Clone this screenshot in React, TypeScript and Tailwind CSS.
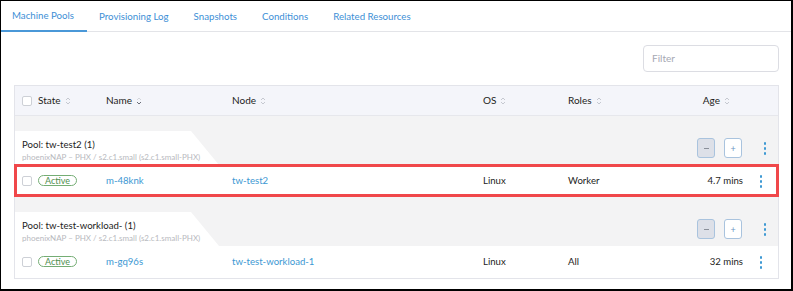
import React from 'react';

type Machine = {
    name: string;
    node: string;
    os: string;
    roles: string;
    age: string;
    highlight?: boolean;
};

type Pool = {
    title: string;
    sub: string;
    machine: Machine;
};

const pools: Pool[] = [
    {
        title: 'Pool: tw-test2 (1)',
        sub: 'phoenixNAP – PHX / s2.c1.small (s2.c1.small-PHX)',
        machine: { name: 'm-48knk', node: 'tw-test2', os: 'Linux', roles: 'Worker', age: '4.7 mins', highlight: true },
    },
    {
        title: 'Pool: tw-test-workload- (1)',
        sub: 'phoenixNAP – PHX / s2.c1.small (s2.c1.small-PHX)',
        machine: { name: 'm-gq96s', node: 'tw-test-workload-1', os: 'Linux', roles: 'All', age: '32 mins' },
    },
];

const tabs = ['Machine Pools', 'Provisioning Log', 'Snapshots', 'Conditions', 'Related Resources'];

const grid = 'grid grid-cols-[23px_68px_126px_251px_85px_1fr_70px_35px] items-center';

function SortIcon({ active }: { active?: boolean }) {
    return (
        <svg width="6" height="10" viewBox="0 0 6 10" className="ml-[4px]">
            <path d="M1 4 L3 2 L5 4" fill="none" stroke={active ? '#d3d6dc' : '#c5c8d0'} strokeWidth="1" />
            <path d="M1 6 L3 8 L5 6" fill="none" stroke={active ? '#6b6e78' : '#c5c8d0'} strokeWidth="1" />
        </svg>
    );
}

function Checkbox() {
    return <span className="block w-[10px] h-[10px] rounded-[2px] border border-[#cdd0d6] bg-white" />;
}

function Kebab() {
    return (
        <div className="flex flex-col gap-[2px]">
            {[0, 1, 2].map((i) => (
                <span key={i} className="block w-[2px] h-[3px] rounded-full bg-[#3d98d3]" />
            ))}
        </div>
    );
}

function PoolGroup({ pool }: { pool: Pool }) {
    const m = pool.machine;
    return (
        <div>
            {/* pool header */}
            <div className="bg-[#f3f3f4] pt-[15px]">
                <div className="flex items-center h-[34px]">
                    <div className="w-[204px] h-full bg-white pl-[7px] pt-[8px] [clip-path:polygon(0_0,176px_0,100%_100%,0_100%)]">
                        <div className="text-[9.6px] leading-[12px] text-[#1d1d22]">{pool.title}</div>
                        <div className="text-[8px] leading-[11px] mt-[1px] text-[#b8b9be] whitespace-nowrap">{pool.sub}</div>
                    </div>
                    <div className="flex-1 flex items-center justify-end">
                        <button className="w-[18px] h-[20px] rounded-[3px] border border-[#a9c3de] bg-[#dde0e8] flex items-center justify-center">
                            <span className="block w-[5px] h-px bg-[#8a8f99]" />
                        </button>
                        <button className="ml-[9px] w-[18px] h-[20px] rounded-[3px] border border-[#a9c3de] bg-white flex items-center justify-center text-[9px] leading-none text-[#6b96c4]">
                            +
                        </button>
                        <div className="ml-[22px] mr-[12px]">
                            <Kebab />
                        </div>
                    </div>
                </div>
            </div>
            {/* machine row */}
            <div className={`${grid} relative h-[32px] bg-white text-[9.6px] text-[#1d1d22]`}>
                <div className="pl-[7px]">
                    <Checkbox />
                </div>
                <div>
                    <span className="inline-flex items-center h-[11px] px-[6px] rounded-full border border-[#74ad74] text-[9px] text-[#4f8f4f] leading-none">
                        Active
                    </span>
                </div>
                <div className="text-[#3d98d3]">{m.name}</div>
                <div className="text-[#3d98d3]">{m.node}</div>
                <div>{m.os}</div>
                <div>{m.roles}</div>
                <div className="text-right">{m.age}</div>
                <div className="pl-[17px]">
                    <Kebab />
                </div>
                {m.highlight && (
                    <div className="absolute left-[-1px] right-[-1px] top-[-1px] bottom-0 border-[3px] border-[#f0474a] pointer-events-none" />
                )}
            </div>
        </div>
    );
}

export default function App() {
    return (
        <div className="w-[793px] h-[291px] bg-white border-t border-l border-r-2 border-b-2 border-black overflow-hidden font-['Lato','Noto_Sans',sans-serif]">
            <nav className="flex h-[31px] border-b border-[#e3e4e8]">
                {tabs.map((t, i) => (
                    <div
                        key={t}
                        className={
                            'h-[31px] flex items-center text-[9.7px] text-[#3d8fd6] ' +
                            (i === 0 ? 'border-b-2 border-[#4a98d8] pl-[11px] pr-[13px]' : 'pl-[12px] pr-[13px]')
                        }
                    >
                        {t}
                    </div>
                ))}
            </nav>

            <div className="pl-[13px] pr-[12px]">
                <div className="flex justify-end mt-[13px]">
                    <div className="w-[136px] h-[27px] rounded-[4px] border border-[#dcdde3] flex items-center pl-[8px] text-[10px] text-[#a6a8b3]">
                        Filter
                    </div>
                </div>

                <div className="mt-[13px] border border-[#e3e4ea]">
                    <div className={`${grid} h-[30px] bg-[#f4f5fa] border-b border-[#e6e7ec] text-[10px] text-[#1d1d22]`}>
                        <div className="pl-[7px]">
                            <Checkbox />
                        </div>
                        <div className="flex items-center">State<SortIcon /></div>
                        <div className="flex items-center">Name<SortIcon active /></div>
                        <div className="flex items-center">Node<SortIcon /></div>
                        <div className="flex items-center">OS<SortIcon /></div>
                        <div className="flex items-center">Roles<SortIcon /></div>
                        <div className="flex items-center justify-end pr-[13px]">Age<SortIcon /></div>
                        <div />
                    </div>
                    {pools.map((p) => (
                        <PoolGroup key={p.title} pool={p} />
                    ))}
                </div>
            </div>
        </div>
    );
}
